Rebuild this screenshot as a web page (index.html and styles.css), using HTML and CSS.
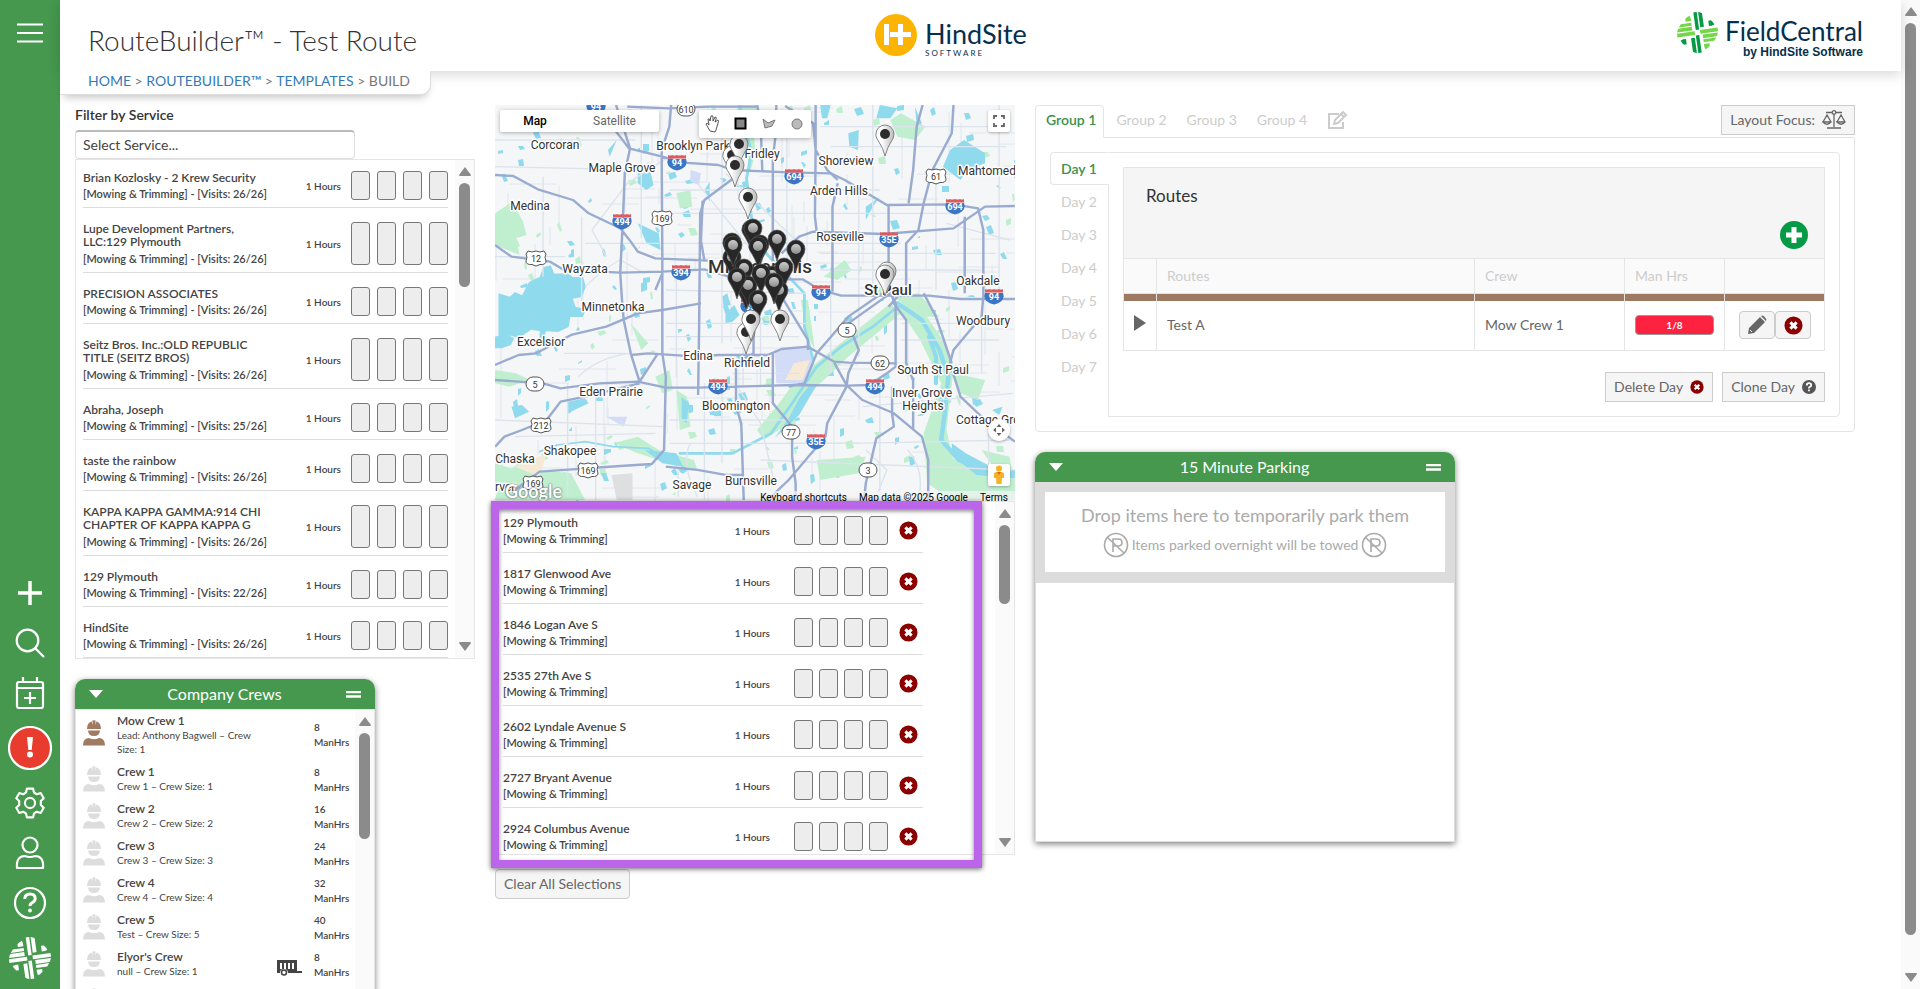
FILE: index.html
```html
<!DOCTYPE html>
<html lang="en">
<head>
<meta charset="utf-8">
<title>RouteBuilder - Test Route</title>
<link rel="stylesheet" href="styles.css">
</head>
<body>
<svg class="defs" width="0" height="0" aria-hidden="true">
  <defs>
    <symbol id="weave" viewBox="0 0 120 120">
      <g transform="rotate(-8 60 60)">
        <g id="warp" class="weave-a"><path d="M56 0h10v52H56zM70 1q8 2 11 5v40H70zM104 30q6 6 8 14l-8 2h-8V30z"/></g>
        <use href="#warp" class="weave-a" transform="rotate(180 60 60)"/>
        <g id="weft" class="weave-b"><path transform="rotate(90 60 60)" d="M54 0h11v52H54zM68 1q8 2 11 5v40H68zM82 8q6 4 9 7v31h-9zM104 30q6 6 8 14l-8 2h-8V30z"/></g>
        <use href="#weft" class="weave-b" transform="rotate(180 60 60)"/>
      </g>
    </symbol>
    <symbol id="xcircle" viewBox="0 0 20 20"><circle cx="10" cy="10" r="9.5"/><path d="M6.7 6.7l6.6 6.6M13.3 6.7l-6.6 6.6" stroke="#fff" stroke-width="3.2"/></symbol>
    <symbol id="up" viewBox="0 0 12 9"><path d="M6 0 12 8Q12 9 11 9H1Q0 9 0 8z"/></symbol>
    <symbol id="down" viewBox="0 0 12 9"><path d="M6 9 0 1Q0 0 1 0H11Q12 0 12 1z"/></symbol>
    <symbol id="worker" viewBox="0 0 22 26"><path d="M4 9Q4 3 8.500 1.200L9.500 5V.5Q11 0 12.500 .5V5L13.500 1.200Q18 3 18 9zM5 10.500H17Q16.500 16 11 16T5 10.500zM0 25.500Q0 18 6 18Q11 20.500 16 18Q22 18 22 25.500z"/></symbol>
    <symbol id="nopark" viewBox="0 0 26 26"><g fill="none" stroke="currentColor" stroke-width="1.600"><circle cx="13" cy="13" r="11.500"/><path d="M4 5 21 21M10 20V7h5q4 0 4 3.500T15 14h-5" /></g></symbol>
    <linearGradient id="lightpin" x1="0" x2="1"><stop offset=".3" stop-color="#fff"/><stop offset="1" stop-color="#bbb"/></linearGradient>
    <linearGradient id="greydot" x1="0" y1="0" x2="0" y2="1"><stop offset="0" stop-color="#ccc"/><stop offset="1" stop-color="#8c8c8c"/></linearGradient>
    <symbol id="pin-light" viewBox="-10 -10 20 34" overflow="visible"><path d="M0 22Q-2 14-6 8T-9 0A9 9 0 0 1 9 0Q9 4 6 8T0 22z" fill="url(#lightpin)" stroke="#777" stroke-width=".9"/><circle r="5" fill="#2c2c2c"/></symbol>
    <symbol id="pin-dark" viewBox="-10 -10 20 34" overflow="visible"><path d="M0 22Q-2 14-6 8T-9 0A9 9 0 0 1 9 0Q9 4 6 8T0 22z" fill="#272727" stroke="#555" stroke-width=".7"/><circle r="5" fill="url(#greydot)"/></symbol>
    <symbol id="i-shield" viewBox="-10 -8 20 17"><path d="M-9-3Q-12 6 0 8.500Q12 6 9-3z" fill="#3b76c4"/><path d="M-9-3.500V-7q2 1 4 0q2.500 1 5 0q2.500 1 5 0q2 1 4 0v3.500z" fill="#dd5a5f"/></symbol>
    <symbol id="u-shield" viewBox="-11 -8 22 17"><path d="M-8-7q4 2 8 0q4 2 8 0l2 3q-2 3 0 7q0 4-6 3.500L0 8-4 6.500q-6 .5-6-3.500q2-4 0-7z" fill="#fff" stroke="#555"/></symbol>
  </defs>
</svg>

<div class="app">
  <nav class="rail" aria-label="Main">
    <button class="rail-btn rail-menu" aria-label="Menu"><svg width="26" height="20"><path d="M0 1.500h26M0 10h26M0 18.500h26" stroke-width="2.200"/></svg></button>
    <button class="rail-btn" aria-label="Add"><svg width="26" height="26"><path d="M13 1v24M1 13h24" stroke-width="3.500"/></svg></button>
    <button class="rail-btn" aria-label="Search"><svg width="30" height="30"><circle cx="12.500" cy="12.500" r="10.800"/><path d="M20 20l9 9"/></svg></button>
    <button class="rail-btn" aria-label="Schedule"><svg width="30" height="34"><rect x="2" y="6" width="26" height="26" rx="2"/><path d="M2 12h26M8 1v5M22 1v5M15 16v12M9 22h12"/></svg></button>
    <button class="rail-btn rail-tall" aria-label="Alerts"><svg width="44" height="44"><circle cx="22" cy="22" r="21" fill="#e73c2e"/><path d="M19 11h6l-1.300 13h-3.400z" fill="#fff" stroke="none"/><circle cx="22" cy="28.500" r="3" fill="#fff" stroke="none"/></svg></button>
    <button class="rail-btn" aria-label="Settings"><svg width="32" height="32" viewBox="0 0 24 24"><g stroke-width="1.600"><path d="M9.700 1.200h4.600l.7 3 2.100 1.200 2.900-.9 2.300 4-2.200 2v3l2.200 2-2.300 4-2.900-.9-2.100 1.200-.7 3H9.700l-.7-3-2.100-1.200-2.900.9-2.300-4 2.200-2v-3l-2.200-2 2.300-4 2.900.9L9 4.200z" stroke-linejoin="round"/><circle cx="12" cy="12" r="3.800"/></g></svg></button>
    <button class="rail-btn" aria-label="Account"><svg width="30" height="34"><circle cx="15" cy="9" r="7.500"/><path d="M2 32q-1-12 8-12q5 2 10 0q9 0 8 12z" stroke-linejoin="round"/></svg></button>
    <button class="rail-btn" aria-label="Help"><svg width="34" height="34"><circle cx="17" cy="17" r="15"/><path d="M11.800 13q0-5 5.200-5t5.200 4.500q0 2.500-2.700 4t-2.500 3.700" stroke-width="3"/><circle cx="17" cy="24.500" r="1.900" fill="#fff" stroke="none"/></svg></button>
    <button class="rail-btn rail-tall weave-white" aria-label="FieldCentral"><svg class="solid" width="42" height="42"><use href="#weave"/></svg></button>
  </nav>

  <div class="page">
    <header class="top">
      <h1 class="title">RouteBuilder™ - Test Route</h1>
      <div class="brand">
        <svg width="42" height="42"><circle cx="21" cy="21" r="21" fill="#fdb400"/><path d="M9 10h5v21H9zM15 18h8v-8h5v8h8v5h-8v8h-5v-8h-8z" fill="#fff"/></svg>
        <div class="brand-text"><span class="brand-name">HindSite</span><span class="brand-sub">SOFTWARE</span></div>
      </div>
      <div class="product">
        <svg width="41" height="41"><use href="#weave"/></svg>
        <div class="product-text"><span class="product-name">FieldCentral</span><span class="product-sub">by HindSite Software</span></div>
      </div>
    </header>
    <nav class="crumbs" aria-label="Breadcrumb"><a href="#">HOME</a> &gt; <a href="#">ROUTEBUILDER™</a> &gt; <a href="#">TEMPLATES</a> &gt; BUILD</nav>

    <main class="columns">
      <section class="col-left">
        <label class="filter-label" for="service">Filter by Service</label>
        <select id="service" class="filter"><option>Select Service...</option></select>
        <div class="list customers">
          <div class="rows" id="customers"></div>
          <div class="bar"><svg width="12" height="9"><use href="#up"/></svg><i class="thumb"></i><svg class="bar-end" width="12" height="9"><use href="#down"/></svg></div>
        </div>
        <section class="panel crews">
          <h2 class="panel-head"><svg width="14" height="8"><path d="M0 0h14L7 8z" fill="#fff"/></svg><span>Company Crews</span><svg width="15" height="7"><path d="M0 1h15M0 5.500h15" stroke="#fff" stroke-width="2.500"/></svg></h2>
          <div class="list crew-list">
            <div class="crew-rows" id="crews"></div>
            <div class="bar"><svg width="12" height="9"><use href="#up"/></svg><i class="thumb"></i></div>
          </div>
        </section>
      </section>

      <section class="col-mid">
        <div class="map">
          <svg class="map-art" viewBox="0 0 520 396" preserveAspectRatio="xMinYMin slice" role="img" aria-label="Map of Minneapolis">
            <rect width="520" height="396" fill="#f5f6f7"/>
            <g id="texture"></g>
            <g transform="scale(.3508 .3333) translate(-43 -45)">
              <g fill="#c0efd0">
                <path d="M43 370l50-35 30 60 10 40-30 10 10 50-70-30z"/>
                <path d="M1190 650l50-20 80 120 30 90-20 180 20 90 175 50v70h-180l-70-50-10-150 50-150-60-130z"/>
                <path d="M1180 620l70-10 60 70-60 0z"/>
                <path d="M1170 640l30 30-150 130-90 90-80 110-70 50-20-30 70-90 40-60 80-70z"/>
                <path d="M380 1060l70-20 60 40 100 30 10 30-80-20-90-30z"/>
                <path d="M60 1160l50-40 50 20 100 10 40 80H43z"/>
                <path d="M500 860l40-20 10 60-30 10zM560 900l30 20 10 90-30 10zM960 1110l140-10-20 50-110 20zM1170 90l30-20 70 40-30 40-50-10zM735 45h60l-20 60-50 40zM915 630l20 0 20 150-25-50z"/>
                <path d="M560 310l40-10 5 50-35 5zM430 700l50 60-20 20zM750 130l30-20 5 80-15 60zM980 560l60-50 20 30-40 30zM43 1120l60 20-30 60-30-20zM1350 850l90 20-20 60-50-20z"/>
                <path d="M43 840l60 10 40 20-60 20-40-10zM1430 1080l80 20 10 60-50-20z"/>
              </g>
              <path d="M840 780l90-10 25 40-30 70h-80z" fill="#d2dcf6"/><path d="M600 240l30 10-5 35-25-10zM360 980l60 0-10 30z" fill="#d2dcf6"/>
              <path d="M895 820l45-10-20 60h-50zM100 1130l90-40-20 70z" fill="#f6ead6"/>
              <path d="M375 1155l60-5 0 80h-45z" fill="#dddfe1"/>
              <g fill="#90daee">
                <path d="M60 612l25 8 15-14 20 10 20-40 30-15 12-30 20-5 10 25 40-2 12 12 30 0 8 30-12 30-25 5 8 25 30 5-10 25-35 0-5 30-30 15-35-2-8 40-12-5 3-35-25-5-35 25-35-10-23 15V610zM43 740l30-10 25 15-10 20-25 10-20 0z"/>
                <path d="M1340 180l40-30 60 40 0 30-50 20-20 30-50-40zM450 400l60 30 5 50-40-20zM1050 130l30-10-2 60-25-10zM1100 350l40-30-20 30-20 40zM700 670l25-25 15 30-20 20-20 5zM690 620l15-10 10 35-20 5zM390 150l-20 50-5-20zM450 250l35-10 10 45-20 15-25-20zM90 950l30-5 20 20-40 20zM250 935l50-10 10 15-60 30zM470 1080l90 10 20 40-60-10zM970 45l30 0-10 40-15 0zM1460 960l30-10-10 25zM575 920l20 20-5 60-15-10zM1140 45l50 10-20 30-40 0zM1240 50l20 50-15 5zM640 300l15-25 0 60z"/>
                <path d="M880 985l30-60 30-40 20 0-50 90-70 70zM1345 1060l40 30 90 50 50 0v25l-110-10-70-60z"/>
              </g>
              <g fill="none" stroke="#90daee" stroke-linecap="round" stroke-linejoin="round">
                <path d="M740 45l10 60 25 80-15 80 10 80 10 90 40 60 60 65 45 50 0 100 25 100" stroke-width="8"/>
                <path d="M1190 650l-70 60-90 60-70 60-70 110-60 90-110 60-90 0-60 0" stroke-width="8"/>
                <path d="M560 1125l-80-50-100-5-80-15-80 10-50 20" stroke-width="5"/>
                <path d="M1190 640l70 50 50 90 25 80-10 110-10 80 50 60 90 40 70 0" stroke-width="13"/>
                <path d="M1280 740l20 60 0 80M1320 900l-10 60" stroke-width="12"/>
              </g>
              <g class="roads minor">
                <path d="M290 380v260M460 45v400M690 60v700M750 560v330M800 600v290M875 60v500M1080 300v500M1120 45v560M1480 45v560M1300 250v350M560 560v300M180 560v-300M1000 600v250M1140 880v340M1430 850v-150M250 880v340M330 900v330M640 880v350M690 880v240M1450 1000v230M565 1130v90"/>
                <path d="M43 150h400M43 230l420 10M540 300h600M540 370l800 0M300 460h900M530 600l400 10M970 490l500 0M970 540h460M43 500h200M530 700h400M530 740h380M720 850h190M240 790h180M43 990l480 20M540 990l340 0M540 1060h500M1060 1060l460-10M800 1110l720 30M1090 950l430-40M1200 750h280M1200 700h200M100 1040l400-10M1330 400l180 50M1000 170h500M970 110h500"/>
                <path d="M700 250l200 200M620 280l200 260M540 200l-120 80-100 140 40 80M300 590q60-60 100-80l70 40M1100 1080l60 60-30 80M280 860q60-60 150-70M740 900l60 100 40 180M1220 1080q50 60 30 150M600 1060q-30 60 20 160"/>
              </g>
              <g class="roads major">
                <path d="M330 45l95 130 95 25 60 18 100 7 40 15 160 7 120 3 40 20 120 75 190-2 70 12 15 65v200l-5 60-80 100-10 40 30 100 70 70 85 65M388 45l40 130-15 75-5 130-8 170 5 80 5 60 20 100 25 85M545 45l-5 65-22 70 2 320v290l10 70-5 220-35 42-90 6-230 17-70 55M735 255l-95 75-12 40-3 330-3 215M43 255l52 3 70 40 100 32 45 40 90 45 30 40 20 30 50 20 150 7M43 465l47 35 110 15 40 25 160 8 120-3 120-7 80 25 100 5 100 0 50 32 60 17h250l90 10h205"/>
                <path d="M790 45l10 45 5 155M845 45l-2 90-8 70v310M870 48l80 52 7 80 33 60 30 30M1262 45l-17 65-10 130-13 100M1165 345v255M1350 45l-5 85-55 110-25 100-15 80-35 40v130l-50 60M860 490l50-50 40-15 200 7 200-17 90-65 85-2M957 45l0 135-2 200 5 45M1020 280l-15 70v255M1382 380v230M420 50l120 5 110-5 140 0M640 512l-10-60 5-120"/>
                <path d="M43 870l137 10 50 15 110-15 110-5 80 18h90l280-8 150 2 60-2 50-35 25-20V640l-20-40M43 825l67-30 50-5 100-55 100-25 90-40 70-10 110-20M430 795l50-5 140 10 60-5h140l40-18 75-7 75 45 40 3 135 2M455 880l-155 40-70 15-40 55-70 30-50 20-27 30M780 640v150l-50 30v130l15 50 7 230M835 790v150l55 70v90l10 80v50M1160 600l-110 80-90 110-35 90-45 10M1170 610l-120 90 30 80-30 70-5 40-55 110-5 40-105 130-60 60"/>
                <path d="M1175 610l5 30 35 50v130l20 50v150M1010 818l35 67 45 45 90 40 80 70 18 70v120M1175 890l0 80 5 40-50 35-30 135-5 50M1265 610l35 70 45 140M530 1130l90 10 80 15h52M860 620l75 130v30M455 875l50-80M500 600l20-50"/>
              </g>
            </g>
            <g id="shields"></g>
            <g id="places"></g>
            <g id="pins"></g>
          </svg>
          <div class="map-type"><button class="on">Map</button><button>Satellite</button></div>
          <div class="map-tools">
            <button aria-label="Pan"><svg width="16" height="18"><path d="M5 16L1 9q1-2 3 1L3 4q2-1 2 2l1-5q2-1 2 1v4l2-4q2 0 1 2l-1 3 3-2q1 1 0 3l-2 7-1 2z" fill="#fff" stroke="#444" stroke-width=".9"/></svg></button>
            <button aria-label="Draw rectangle"><svg width="14" height="14"><rect x="1.500" y="1.500" width="10" height="10" fill="#888" stroke="#000" stroke-width="2"/></svg></button>
            <button aria-label="Draw polygon"><svg width="14" height="14"><path d="M1 2l5 4 7-3-3 6-7 2z" fill="#bbb" stroke="#777"/></svg></button>
            <button aria-label="Draw circle"><svg width="14" height="14"><circle cx="7" cy="7" r="5" fill="#bbb" stroke="#777"/></svg></button>
          </div>
          <button class="map-full" aria-label="Full screen"><svg width="12" height="12"><path d="M1 4V1h3M8 1h3v3M11 8v3H8M4 11H1V8" fill="none" stroke="#666" stroke-width="1.800"/></svg></button>
          <button class="map-pan" aria-label="Camera controls"><svg width="12" height="12"><path d="M6 0l2.500 3h-5zM6 12l2.500-3h-5zM0 6l3-2.500v5zM12 6L9 3.500v5z" fill="#666"/></svg></button>
          <button class="map-peg" aria-label="Street View"><svg width="12" height="20"><circle cx="6" cy="3.500" r="3" fill="#f5b324"/><path d="M1 8q5-2.500 10 0v5H9l-.5 6h-5L3 13H1z" fill="#f5b324"/><path d="M4 7l2 3 2-3" fill="#d9662a"/></svg></button>
          <span class="map-google">Google</span>
          <div class="map-foot"><span>Keyboard shortcuts</span><span>Map data ©2025 Google</span><span>Terms</span></div>
        </div>
        <div class="list selected">
          <div class="rows" id="selected"></div>
          <div class="bar"><svg width="12" height="9"><use href="#up"/></svg><i class="thumb"></i><svg class="bar-end" width="12" height="9"><use href="#down"/></svg></div>
          <div class="marker"></div>
        </div>
        <button class="btn btn-round">Clear All Selections</button>
      </section>

      <section class="col-right">
        <div class="tabs">
          <button class="tab on">Group 1</button><button class="tab">Group 2</button><button class="tab">Group 3</button><button class="tab">Group 4</button>
          <button class="tab" aria-label="Edit groups"><svg width="22" height="19" fill="none" stroke="#ccc" stroke-width="2"><path d="M12 3H2v14h14v-6"/><path d="M7 13l1-4 8-8 3 3-8 8zM14 3l3 3"/></svg></button>
          <button class="btn focus">Layout Focus: <svg width="24" height="20" fill="none" stroke="#666" stroke-width="1.300"><path d="M4 2.500h16M12 4v13M5 18h14M1 12l4-7 4 7q-4 4.500-8 0h8M15 12l4-7 4 7q-4 4.500-8 0h8"/><circle cx="12" cy="2.500" r="1.800" fill="#f5f5f5"/></svg></button>
        </div>
        <div class="group">
          <div class="days"><button class="day on">Day 1</button><button class="day">Day 2</button><button class="day">Day 3</button><button class="day">Day 4</button><button class="day">Day 5</button><button class="day">Day 6</button><button class="day">Day 7</button></div>
          <div class="day-body">
            <div class="grid-head"><h3>Routes</h3><button class="add" aria-label="Add route"><svg width="28" height="28"><circle cx="14" cy="14" r="14" fill="#049a46"/><path d="M14 6v16M6 14h16" stroke="#fff" stroke-width="5"/></svg></button></div>
            <table class="grid">
              <thead><tr><th class="c-exp"></th><th>Routes</th><th class="c-crew">Crew</th><th class="c-hrs">Man Hrs</th><th class="c-act"></th></tr></thead>
              <tbody>
                <tr class="stripe"><td></td><td></td><td></td><td></td><td></td></tr>
                <tr class="route"><td class="exp"><button aria-label="Expand"><svg width="12" height="16"><path d="M0 0l12 8-12 8z" fill="#666"/></svg></button></td><td>Test A</td><td>Mow Crew 1</td><td><div class="meter">1/8</div></td>
                <td><div class="acts"><button aria-label="Edit"><svg width="20" height="20"><path d="M1 19l1-6L13 2l5 5L7 18zM14 1q1.500-1 3 .5l1.500 1.500q1.500 1.500 .5 3z" fill="#666"/><path d="M3 15l2 2" stroke="#fff"/></svg></button><button class="danger" aria-label="Remove"><svg width="19" height="19"><use href="#xcircle"/></svg></button></div></td></tr>
              </tbody>
            </table>
            <div class="day-acts"><button class="btn danger">Delete Day <svg width="14" height="14"><use href="#xcircle"/></svg></button><button class="btn">Clone Day <svg width="14" height="14"><circle cx="7" cy="7" r="7" fill="#555"/><path d="M4.800 5.500q0-2.300 2.200-2.300t2.200 2q0 1-1.200 1.600T7 8.500M7 9.500v1.800" fill="none" stroke="#fff" stroke-width="1.800"/></svg></button></div>
          </div>
        </div>
        <section class="panel parking">
          <h2 class="panel-head"><svg width="14" height="8"><path d="M0 0h14L7 8z" fill="#fff"/></svg><span>15 Minute Parking</span><svg width="15" height="7"><path d="M0 1h15M0 5.500h15" stroke="#fff" stroke-width="2.500"/></svg></h2>
          <div class="drop"><div class="drop-in"><p class="drop-big">Drop items here to temporarily park them</p><p class="drop-small"><svg width="26" height="26"><use href="#nopark"/></svg>Items parked overnight will be towed<svg width="26" height="26"><use href="#nopark"/></svg></p></div></div>
          <div class="lot"></div>
        </section>
      </section>
    </main>
  </div>
  <div class="bar page-bar"><svg width="12" height="9"><use href="#up"/></svg><i class="thumb"></i><svg class="bar-end" width="12" height="9"><use href="#down"/></svg></div>
</div>
<script src="app.js"></script>
</body>
</html>
```
FILE: styles.css
```css
* { box-sizing: border-box; }
body { margin: 0; font: 14px/20px Lato, sans-serif; color: #333; background: #fff; }
button { font: inherit; color: inherit; background: none; border: 0; padding: 0; margin: 0; white-space: nowrap; }
h1, h2, h3, p { margin: 0; font-weight: 400; }
svg { display: block; flex: none; }
.defs { position: absolute; }
.app { display: flex; height: 100vh; overflow: hidden; }
.weave-a { fill: #049a46; }
.weave-b { fill: #74d64b; }

.rail { flex: 0 0 60px; display: flex; flex-direction: column; background: #45984e; padding: 8px 0 1px; }
.rail-btn { height: 50px; flex: none; display: grid; place-items: center; }
.rail-btn svg { fill: none; stroke: #fff; stroke-width: 2.2; }
.rail-btn svg.solid { stroke: none; }
.rail-menu { margin-bottom: auto; }
.rail-tall { height: 60px; }
.weave-white svg { filter: brightness(0) invert(1); }

.page { flex: 1; min-width: 0; }
.top { position: relative; height: 71px; display: grid; grid-template-columns: 787fr 802fr auto; align-items: center; padding: 0 38px 0 28px; box-shadow: 0 4px 12px rgba(0, 0, 0, .15); }
.title { font-size: 28px; line-height: 36px; padding-top: 8px; font-weight: 300; }
.brand { display: flex; gap: 8px; }
.brand-text, .product-text { display: flex; flex-direction: column; color: #05304d; }
.brand-text { padding-top: 6px; }
.brand-name { font-size: 27px; line-height: 28px; }
.brand-sub { font-size: 8px; line-height: 10px; letter-spacing: 2px; }
.product { display: flex; gap: 7px; }
.product-name { font-size: 26px; line-height: 28px; padding-top: 5px; }
.product-sub { font: bold 12px/14px "Liberation Sans", sans-serif; text-align: right; }
.crumbs { position: relative; width: fit-content; height: 24px; padding: 0 20px 0 28px; font-size: 14px; line-height: 20px; color: #777; background: #fff; border: solid #ddd; border-width: 0 1px 1px 0; border-radius: 0 0 10px; box-shadow: 0 6px 8px -4px rgba(0, 0, 0, .25); }
.crumbs a { color: #337ab7; text-decoration: none; }

.columns { display: grid; grid-template-columns: 400fr 520fr 820fr; gap: 20px; padding: 10px 46px 0 15px; }
.columns > section { min-width: 0; }
.filter-label { display: block; font-weight: 600; margin-bottom: 5px; }
.filter { appearance: none; display: block; width: 280px; height: 29px; padding: 0 7px; font: inherit; color: #444; background: #fff; border: 1px solid #ddd; border-top: 2px solid #bbb; border-radius: 4px; }
.list { display: flex; border: 1px solid #e5e5e5; background: #fff; }
.customers { height: 500px; }
.rows { flex: 1; min-width: 0; overflow: hidden; padding: 0 7px; }
.row { display: flex; align-items: stretch; border-bottom: 1px solid #ddd; padding: 14px 0 7px; font-size: 11px; font-weight: 600; color: #444; }
.row-text { flex: 1; line-height: 13px; }
.row-name { display: block; margin-bottom: 3px; font-size: 12px; line-height: 13px; max-width: 180px; }
.row-name.long { margin-bottom: 4px; }
.row-hours { align-self: center; margin-right: 10px; font-size: 10px; }
.slots { display: flex; gap: 7px; }
.slot { width: 19px; background: #ededed; border: 1px solid #777; border-radius: 3px; }
.danger { fill: #8b0000; }
.row .remove { margin: 0 5px 0 11px; align-self: center; fill: #8b0000; }
.bar { flex: none; width: 19px; display: flex; flex-direction: column; align-items: center; gap: 7px; padding: 7px 0; background: #fafafa; fill: #8b8b8b; }
.thumb { width: 11px; height: 104px; border-radius: 6px; background: #8b8b8b; }
.bar-end { margin-top: auto; }
.customers .rows .row:first-child { padding-top: 11px; }

.panel { border-radius: 10px 10px 0 0; box-shadow: 0 2px 6px rgba(0, 0, 0, .5); background: #fff; }
.panel-head { display: flex; align-items: center; justify-content: space-between; height: 30px; padding: 0 14px; border-radius: 10px 10px 0 0; background: #45984e; color: #fff; font-size: 16px; }
.crews { width: 300px; margin-top: 20px; }
.crew-list { height: 400px; }
.crew-list .thumb { height: 106px; }
.crew-rows { flex: 1; padding: 4px 0 0 7px; }
.crew { display: flex; padding-bottom: 7px; font-size: 10px; line-height: 14px; color: #444; }
.crew svg { margin: 1px 12px 0 0; fill: #ddd; height: 26px; }
.crew-info { flex: 1; }
.crew-info p { max-width: 150px; }
.crew-name { display: block; font-size: 12px; font-weight: 600; line-height: 14px; }
.crew-hrs { align-self: center; width: 34px; margin-right: 7px; line-height: 15px; font-weight: 600; }
.crew.lead { padding-bottom: 9px; }
.crew.lead svg { fill: #a07a61; margin-top: 6px; }
.crew .truck { fill: #444; height: 17px; margin-top: 9px; }

.col-mid { display: flex; flex-direction: column; align-items: stretch; }
.map { position: relative; height: 396px; overflow: hidden; font-family: Roboto, sans-serif; }
.map-art { width: 100%; height: 396px; }
.roads { fill: none; stroke-linejoin: round; }
.minor { stroke: #dce3ed; stroke-width: 4; }
.major { stroke: #9aabd0; stroke-width: 7; }
.place { font: 12px Roboto, sans-serif; fill: #333; stroke: #fff; stroke-width: 3px; paint-order: stroke; stroke-linejoin: round; text-anchor: middle; }
.place.city { font-size: 19px; font-weight: 500; }
.place.town { font-size: 15px; font-weight: 500; }
.place.start { text-anchor: start; }
.sh { font: 9px Roboto, sans-serif; text-anchor: middle; fill: #333; }
.sh.i { fill: #fff; font-weight: 700; }
.map-type, .map-tools { position: absolute; top: 5px; display: flex; background: #fff; box-shadow: 0 1px 4px rgba(0, 0, 0, .3); border-radius: 2px; }
.map-type { left: 5px; font-size: 12px; color: #666; }
.map-type button { height: 22px; width: 89px; }
.map-type .on { width: 70px; color: #000; font-weight: 500; }
.map-tools { left: 204px; }
.map-tools button { width: 28px; height: 28px; display: grid; place-items: center; }
.map-full, .map-pan, .map-peg { position: absolute; right: 5px; width: 22px; height: 22px; display: grid; place-items: center; background: #fff; border-radius: 2px; box-shadow: 0 1px 3px rgba(0, 0, 0, .3); }
.map-full { top: 5px; }
.map-pan { bottom: 60px; border-radius: 11px; }
.map-peg { bottom: 15px; }
.map-google { position: absolute; left: 10px; bottom: -2px; font: 700 18px/24px Lato, sans-serif; color: #fff; text-shadow: 0 0 2px #555, 0 0 1px #777; }
.map-foot { position: absolute; right: 0; bottom: -4px; display: flex; gap: 12px; padding: 0 7px; font-size: 10px; line-height: 14px; color: #000; background: rgba(245, 245, 245, .7); }
.selected { position: relative; height: 354px; }
.selected .rows { padding: 0 72px 0 7px; }
.selected .slots { gap: 6px; }
.selected .row-hours { margin-right: 24px; }
.selected .thumb { height: 79px; }
.marker { position: absolute; left: -5px; top: -1px; right: 32px; height: 367px; border: 8px solid #bb66ea; box-shadow: 0 1px 5px rgba(0, 0, 0, .6), inset 0 2px 4px rgba(0, 0, 0, .5); pointer-events: none; }
.btn { display: inline-flex; align-items: center; justify-content: center; gap: 7px; height: 30px; padding: 0 8px; color: #666; background: #f5f5f5; border: 1px solid #ccc; }
.btn-round { align-self: flex-start; margin-top: 14px; border-radius: 4px; }

.tabs { display: flex; align-items: flex-start; height: 32px; color: #ccc; }
.tab { height: 33px; padding: 0 7px 3px 11px; border: 1px solid transparent; }
.tab.on { position: relative; min-width: 69px; padding: 0 7px 3px 10px; background: #fff; border-color: #e5e5e5; border-bottom-color: #fff; border-radius: 4px 4px 0 0; color: #3c914b; font-weight: 600; }
.focus { margin-left: auto; }
.group { display: flex; padding: 14px; border: 1px solid #e5e5e5; border-radius: 0 0 4px 4px; }
.days { display: flex; flex-direction: column; width: 58px; color: #ccc; }
.day { height: 33px; flex: none; padding: 0 10px; text-align: left; border: 1px solid transparent; }
.day.on { position: relative; width: 59px; background: #fff; border-color: #e5e5e5; border-right-color: #fff; border-radius: 4px 0 0 4px; color: #3c914b; font-weight: 600; }
.day-body { flex: 1; padding: 14px; border: 1px solid #e5e5e5; border-radius: 0 4px 4px 0; }
.grid-head { display: flex; justify-content: space-between; height: 91px; padding: 17px 16px 9px 22px; background: #f5f5f5; border: 1px solid #e5e5e5; border-bottom: 0; }
.grid-head h3 { font-size: 17px; line-height: 22px; }
.add { align-self: flex-end; }
.grid { width: 100%; border-collapse: collapse; table-layout: fixed; color: #666; }
.grid th, .grid td { border: 1px solid #e5e5e5; padding: 0 10px; text-align: left; font-weight: 400; }
.grid th { height: 35px; color: #ccc; background: #fafafa; }
.c-exp { width: 33px; }
.c-crew { width: 150px; }
.c-hrs, .c-act { width: 100px; }
.grid .stripe td { height: 7px; padding: 0; background: #9e7a62; border-bottom: 0; border-top: 0; }
.route td { height: 50px; border-top: 0 !important; }
.meter { height: 20px; border: 1px solid #999; border-radius: 4px; background: #fd2240; color: #fff; font-size: 10px; line-height: 18px; font-weight: 700; text-align: center; }
.acts { display: flex; padding-left: 4px; }
.acts button { width: 36px; height: 28px; display: grid; place-items: center; background: #f5f5f5; border: 1px solid #ccc; border-radius: 4px; }
.day-acts { display: flex; justify-content: flex-end; gap: 9px; padding: 21px 0 0; }
.parking { width: 420px; margin-top: 20px; }
.drop { padding: 10px; background: #dcdcdc; }
.drop-in { height: 80px; padding-top: 10px; background: #fff; color: #aaa; text-align: center; }
.drop-big { font-size: 18px; line-height: 26px; }
.drop-small { display: flex; align-items: center; justify-content: center; gap: 3px; line-height: 34px; }
.lot { height: 260px; border: 1px solid #ddd; }
.page-bar { background: #fafafa; }
.page-bar .thumb { height: 912px; flex: 0 1 912px; }
```
FILE: app.js
```js
const service = "[Mowing & Trimming]";
const customers = [
  ["Brian Kozlosky - 2 Krew Security", "26/26"],
  ["Lupe Development Partners, LLC:129 Plymouth", "26/26"],
  ["PRECISION ASSOCIATES", "26/26"],
  ["Seitz Bros. Inc.:OLD REPUBLIC TITLE (SEITZ BROS)", "26/26"],
  ["Abraha, Joseph", "25/26"],
  ["taste the rainbow", "26/26"],
  ["KAPPA KAPPA GAMMA:914 CHI CHAPTER OF KAPPA KAPPA G", "26/26"],
  ["129 Plymouth", "22/26"],
  ["HindSite", "26/26"]
];
const selected = ["129 Plymouth", "1817 Glenwood Ave", "1846 Logan Ave S", "2535 27th Ave S", "2602 Lyndale Avenue S", "2727 Bryant Avenue", "2924 Columbus Avenue"];
const crews = [
  ["Mow Crew 1", "Lead: Anthony Bagwell – Crew Size: 1", 8], ["Crew 1", "Crew 1 – Crew Size: 1", 8], ["Crew 2", "Crew 2 – Crew Size: 2", 16],
  ["Crew 3", "Crew 3 – Crew Size: 3", 24], ["Crew 4", "Crew 4 – Crew Size: 4", 32], ["Crew 5", "Test – Crew Size: 5", 40],
  ["Elyor's Crew", "null – Crew Size: 1", 8, true]
];
const slots = '<div class="slots">' + '<button class="slot" aria-label="Visit slot"></button>'.repeat(4) + '</div>';
const row = (name, detail, extra) => `<div class="row"><div class="row-text"><span class="row-name${name.length > 34 ? " long" : ""}">${name}</span>${detail}</div><span class="row-hours">1 Hours</span>${slots}${extra}</div>`;
const fill = (id, html) => { document.getElementById(id).innerHTML = html; };

fill("customers", customers.map(([n, v]) => row(n, `${service} - [Visits: ${v}]`, "")).join(""));
fill("selected", selected.map(n => row(n, service, '<button class="remove" aria-label="Remove"><svg width="19" height="19"><use href="#xcircle"/></svg></button>')).join(""));
const truck = '<svg class="truck" width="25" height="17"><path d="M0 1h20v11h5v2H11a4 4 0 0 0-8 0H0zM3 4v6h2V4zM7 4v6h2V4zM11 4v6h2V4zM15 4v6h2V4z" fill-rule="evenodd"/><circle cx="7" cy="13.500" r="2.500" fill="none" stroke="#444" stroke-width="1.500"/></svg>';
const worker = '<svg width="22" height="26"><use href="#worker"/></svg>';
fill("crews", crews.map(([n, d, h, t], i) => `<div class="crew${i ? "" : " lead"}">${worker}<div class="crew-info"><span class="crew-name">${n}</span><p>${d}</p></div>${t ? truck : ""}<div class="crew-hrs">${h}<br>ManHrs</div></div>`).join("") + `<div class="crew">${worker}</div>`);

const places = [
  ["Corcoran", 60, 44], ["Brooklyn Park", 198, 45], ["Fridley", 267, 53], ["Maple Grove", 127, 67], ["Medina", 35, 105], ["Shoreview", 351, 60],
  ["Arden Hills", 344, 90], ["Mahtomedi", 463, 70, "start"], ["Roseville", 345, 136], ["Wayzata", 90, 168], ["Oakdale", 483, 180],
  ["Minneapolis", 265, 168, "city"], ["St Paul", 393, 190, "town"], ["Minnetonka", 118, 206], ["Woodbury", 488, 220], ["Excelsior", 46, 241],
  ["Edina", 203, 255], ["Richfield", 252, 262], ["South St Paul", 438, 269], ["Eden Prairie", 116, 291], ["Inver Grove", 427, 292], ["Heights", 428, 305],
  ["Bloomington", 241, 305], ["Cottage Grove", 461, 319, "start"], ["Shakopee", 75, 350], ["Chaska", 20, 358], ["Savage", 197, 384], ["Burnsville", 256, 380], ["rver", 0, 386, "start"]
];
fill("places", places.map(([t, x, y, c]) => `<text class="place ${c || ""}" x="${x}" y="${y}">${t}</text>`).join(""));

const shields = {
  i: [["94", 101, 1], ["94", 182, 57], ["694", 299, 71], ["494", 127, 116], ["394", 186, 167], ["694", 460, 101], ["35E", 394, 134], ["94", 326, 187], ["94", 499, 191], ["494", 223, 281], ["494", 380, 281], ["35E", 321, 336], ["35", 255, 201]],
  u: [["169", 167, 113], ["12", 41, 153], ["61", 441, 71], ["169", 93, 365], ["169", 38, 378], ["212", 46, 320]],
  c: [["610", 191, 4], ["5", 40, 279], ["5", 352, 225], ["62", 385, 258], ["77", 296, 327], ["3", 373, 365]]
};
fill("shields", Object.entries(shields).map(([k, list]) => list.map(([t, x, y]) => {
  const shape = k === "c" ? `<rect x="${x - 9}" y="${y - 7}" width="18" height="14" rx="7" fill="#fff" stroke="#555"/>` : `<use href="#${k}-shield" x="${x - 11}" y="${y - 8}" width="22" height="17"/>`;
  return `${shape}<text class="sh ${k}" x="${x}" y="${y + 4}">${t}</text>`;
}).join("")).join(""));

const light = [[237, 50], [244, 39], [240, 60], [253, 92], [390, 29], [392, 166], [390, 169], [251, 227], [256, 214], [285, 214]];
const dark = [[256, 124], [258, 123], [265, 139], [263, 141], [237, 152], [237, 137], [238, 140], [282, 134], [301, 144], [249, 163], [251, 183], [253, 180], [242, 172], [277, 170], [266, 168], [289, 162], [284, 185], [279, 177], [263, 194]];
const pin = kind => ([x, y]) => `<use href="#pin-${kind}" x="${x - 10}" y="${y - 10}" width="20" height="34"/>`;
fill("pins", dark.map(pin("dark")).join("") + light.map(pin("light")).join(""));

/* Small ponds, parks and side streets scattered with a fixed seed. */
let seed = 11;
const rnd = n => { seed = (seed * 16807) % 2147483647; return seed % n; };
let tex = "";
for (let i = 0; i < 150; i++) {
  const x = rnd(520), y = rnd(396), l = 15 + rnd(60);
  tex += `<path d="M${x} ${y}${i % 2 ? `h${l}` : `v${l}`}" stroke="#e0e6ef" fill="none"/>`;
}
for (let i = 0; i < 240; i++) {
  const x = rnd(520), y = rnd(396), w = 2 + rnd(6), h = 2 + rnd(7);
  tex += `<path d="M${x} ${y}l${w} ${-rnd(4)} ${rnd(4)} ${h} ${-w} ${rnd(4)}z" fill="${i % 3 ? "#90daee" : "#c0efd0"}"/>`;
}
fill("texture", tex);
```
